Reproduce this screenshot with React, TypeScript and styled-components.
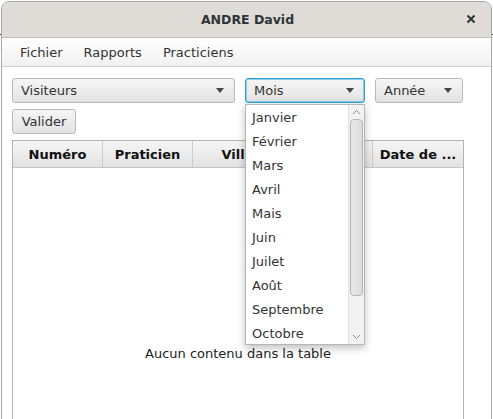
import React from "react";
import styled, { createGlobalStyle } from "styled-components";

const Global = createGlobalStyle`
  html, body { margin: 0; padding: 0; background: #ffffff; }
  body { font-family: "DejaVu Sans", Verdana, sans-serif; font-size: 13px; color: #333; }
  * { box-sizing: border-box; }
`;

const Stage = styled.div`
  width: 493px;
  height: 419px;
  position: relative;
  overflow: hidden;
  background: #ffffff;
`;

const BackLine = styled.div`
  position: absolute;
  left: 0;
  right: 0;
  top: 34px;
  height: 1px;
  background: #444;
`;

const Window = styled.div`
  position: relative;
  margin: 1px 0 0 1px;
  width: 491px;
  height: 550px;
  display: flex;
  flex-direction: column;
  border: 1px solid #a8a8a8;
  border-radius: 8px 8px 0 0;
  background: #ffffff;
  overflow: hidden;
`;

const TitleBar = styled.div`
  height: 36px;
  flex: none;
  display: flex;
  align-items: center;
  justify-content: center;
  position: relative;
  background: #dfdcd8;
  border-bottom: 1px solid #c2beb9;
`;

const Title = styled.span`
  font-weight: bold;
  font-size: 12.5px;
  color: #2e3436;
  margin-left: 2px;
`;

const CloseBtn = styled.span`
  position: absolute;
  right: 14px;
  top: 11px;
  width: 12px;
  height: 12px;
  display: flex;
  align-items: center;
  justify-content: center;
`;

const MenuBar = styled.div`
  height: 29px;
  flex: none;
  display: flex;
  align-items: center;
  padding-left: 7px;
  background: linear-gradient(#ffffff, #f1f1f1);
  border-bottom: 1px solid #cfcfcf;
`;

const MenuItem = styled.span`
  padding: 0 11px 0 11px;
  margin-right: -1px;
  color: #333;
  font-size: 13px;
`;

const Content = styled.div`
  flex: 1;
  display: flex;
  flex-direction: column;
  padding: 11px 27px 10px 10px;
  gap: 6px;
  position: relative;
`;

const Row = styled.div`
  display: flex;
  gap: 10px;
  align-items: center;
`;

const Combo = styled.div<{ $w: number; $focused?: boolean }>`
  width: ${(p) => p.$w}px;
  height: 25px;
  display: flex;
  align-items: center;
  justify-content: space-between;
  padding: 0 10px 0 8px;
  border-radius: 3px;
  border: 1px solid ${(p) => (p.$focused ? "#2b9fd4" : "#b9b9b9")};
  box-shadow: ${(p) => (p.$focused ? "0 0 0 1px #8fcde8 inset" : "none")};
  background: linear-gradient(#f6f6f6, #e2e2e2);
  color: #333;
  font-size: 13px;
`;

const Arrow = styled.span`
  width: 0;
  height: 0;
  border-left: 4.5px solid transparent;
  border-right: 4.5px solid transparent;
  border-top: 5px solid #444;
`;

const Button = styled.div`
  width: 64px;
  height: 25px;
  display: flex;
  align-items: center;
  justify-content: center;
  border-radius: 3px;
  border: 1px solid #b9b9b9;
  background: linear-gradient(#f6f6f6, #e2e2e2);
  color: #333;
  font-size: 13px;
`;

const Table = styled.div`
  flex: 1;
  width: 452px;
  border: 1px solid #b3b3b3;
  display: flex;
  flex-direction: column;
  background: #fff;
`;

const HeaderRow = styled.div`
  height: 27px;
  flex: none;
  display: grid;
  grid-template-columns: 90px 90px 90px 90px 1fr;
  background: linear-gradient(#f5f5f5, #e3e3e3);
  border-bottom: 1px solid #c6c6c6;
`;

const HeaderCell = styled.div`
  display: flex;
  align-items: center;
  justify-content: center;
  font-weight: bold;
  font-size: 13px;
  color: #111;
  border-right: 1px solid #cbcbcb;
  white-space: nowrap;
  overflow: hidden;
  &:last-child { border-right: none; }
`;

const Empty = styled.div`
  flex: 1;
  display: flex;
  align-items: center;
  justify-content: center;
  color: #222;
  font-size: 13px;
`;

const Popup = styled.div`
  position: absolute;
  left: 243px;
  top: 37px;
  width: 120px;
  height: 241px;
  display: flex;
  background: #fff;
  border: 1px solid #b6b6b6;
  box-shadow: 0 3px 8px rgba(0, 0, 0, 0.25);
`;

const List = styled.div`
  flex: 1;
  display: flex;
  flex-direction: column;
  overflow: hidden;
`;

const ListItem = styled.div`
  height: 24px;
  flex: none;
  display: flex;
  align-items: center;
  padding-left: 6px;
  color: #333;
  font-size: 13px;
`;

const ScrollBar = styled.div`
  width: 16px;
  flex: none;
  display: flex;
  flex-direction: column;
  align-items: center;
  background: #f2f2f2;
  border-left: 1px solid #e2e2e2;
`;

const ScrollBtn = styled.div`
  height: 14px;
  width: 100%;
  flex: none;
  display: flex;
  align-items: center;
  justify-content: center;
`;

const Thumb = styled.div`
  width: 13px;
  height: 177px;
  flex: none;
  border-radius: 4px;
  border: 1px solid #b4b4b4;
  background: linear-gradient(90deg, #e9e9e9, #dcdcdc);
`;

const Track = styled.div`
  flex: 1;
`;

const months = ["Janvier", "Février", "Mars", "Avril", "Mais", "Juin", "Juilet", "Août", "Septembre", "Octobre"];

export default function App() {
  return (
    <Stage>
      <Global />
      <BackLine />
      <Window>
        <TitleBar>
          <Title>ANDRE David</Title>
          <CloseBtn>
            <svg width="10" height="10" viewBox="0 0 10 10">
              <path d="M1.5 1.5 L8.5 8.5 M8.5 1.5 L1.5 8.5" stroke="#2e3436" strokeWidth="2" strokeLinecap="butt" />
            </svg>
          </CloseBtn>
        </TitleBar>
        <MenuBar>
          <MenuItem>Fichier</MenuItem>
          <MenuItem>Rapports</MenuItem>
          <MenuItem>Practiciens</MenuItem>
        </MenuBar>
        <Content>
          <Row>
            <Combo $w={223}>
              <span>Visiteurs</span>
              <Arrow />
            </Combo>
            <Combo $w={120} $focused>
              <span>Mois</span>
              <Arrow />
            </Combo>
            <Combo $w={88}>
              <span>Année</span>
              <Arrow />
            </Combo>
          </Row>
          <Row>
            <Button>Valider</Button>
          </Row>
          <Table>
            <HeaderRow>
              <HeaderCell>Numéro</HeaderCell>
              <HeaderCell>Praticien</HeaderCell>
              <HeaderCell>Ville</HeaderCell>
              <HeaderCell>Motif</HeaderCell>
              <HeaderCell>Date de ...</HeaderCell>
            </HeaderRow>
            <Empty>Aucun contenu dans la table</Empty>
          </Table>
          <Popup>
            <List>
              {months.map((m) => (
                <ListItem key={m}>{m}</ListItem>
              ))}
            </List>
            <ScrollBar>
              <ScrollBtn>
                <svg width="9" height="6" viewBox="0 0 9 6">
                  <path d="M1 5 L4.5 1.5 L8 5" fill="none" stroke="#8a8a8a" strokeWidth="1" />
                </svg>
              </ScrollBtn>
              <Thumb />
              <Track />
              <ScrollBtn>
                <svg width="9" height="6" viewBox="0 0 9 6">
                  <path d="M1 1 L4.5 4.5 L8 1" fill="none" stroke="#8a8a8a" strokeWidth="1" />
                </svg>
              </ScrollBtn>
            </ScrollBar>
          </Popup>
        </Content>
      </Window>
    </Stage>
  );
}
